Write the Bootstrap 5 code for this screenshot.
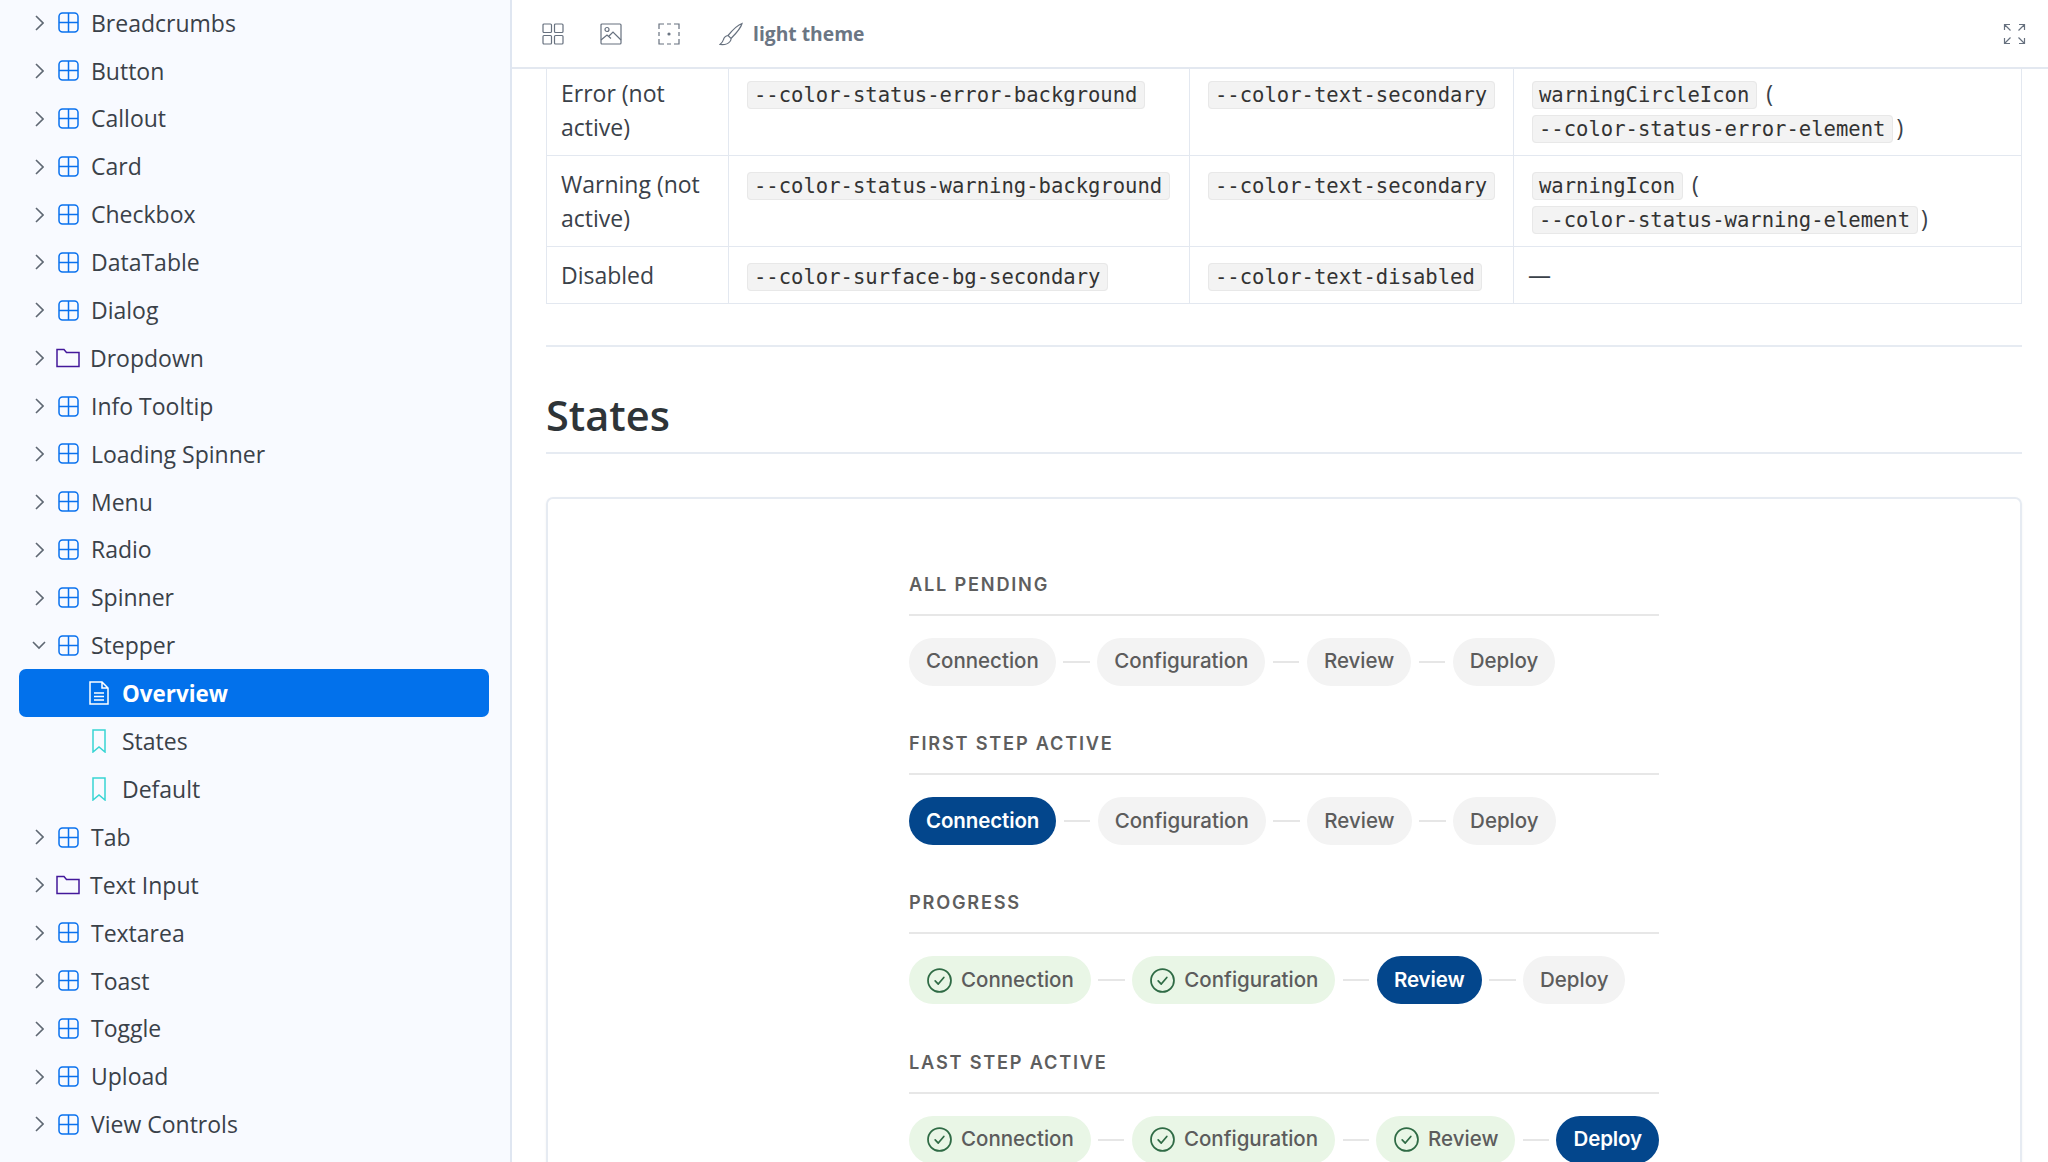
<!DOCTYPE html>
<html lang="en">

<head>
  <meta charset="UTF-8">
  <meta name="viewport" content="width=device-width, initial-scale=1.0">
  <title>Stepper - Overview</title>
  <link href="https://cdn.jsdelivr.net/npm/bootstrap@5.3.0/dist/css/bootstrap.min.css" rel="stylesheet">
  <style>
    html, body { height: 100%; overflow: hidden; }
    body { font-family: "Open Sans", "Noto Sans", sans-serif; color: #2e3438; background: #fff; }

    /* sidebar */
    .side-panel { width: 512px; flex: none; background: #f8faff; border-right: 2px solid #dfe6f1; overflow: hidden; }
    .tree-list { margin: -1px 0 0; padding: 0 21px 0 19px; }
    .tree-row { height: 47.9px; padding-left: 16px; font-size: 23px; color: #3a4149; }
    .tree-row.leaf { padding-left: 70px; }
    .tree-row.selected { background: #0271eb; color: #fff; font-weight: 700; font-size: 22.4px; border-radius: 7px; }
    .chev { width: 9px; height: 16px; flex: none; margin-right: 14px; fill: none; stroke: #5f6873; stroke-width: 1.6; }
    .chev.open { width: 14px; height: 9px; margin-left: -3px; margin-right: 12px; }
    .ic-comp { width: 21px; height: 21px; flex: none; margin-right: 12px; fill: none; stroke: #0971ee; stroke-width: 1.5; }
    .ic-folder { width: 24px; height: 20px; flex: none; margin: 0 10px 0 -2px; fill: none; stroke: #43189b; stroke-width: 1.5; }
    .ic-doc { width: 20px; height: 24px; flex: none; margin-right: 13px; fill: none; stroke: #fff; stroke-width: 1.5; }
    .ic-mark { width: 14px; height: 24px; flex: none; margin: 0 16px 0 3px; fill: none; stroke: #37d5d3; stroke-width: 1.5; }

    /* toolbar */
    .top-bar { height: 69px; flex: none; padding: 0 22px 0 30px; background: #fff; border-bottom: 2px solid #e3e8f0; position: relative; z-index: 1; }
    .tool-ic { width: 22px; height: 22px; fill: none; stroke: #67717f; stroke-width: 1.2; margin-right: 36px; }
    .tool-ic.brush { width: 25px; height: 24px; margin-right: 9px; margin-left: 3px; }
    .tool-ic.expand { margin-right: 0; width: 23px; }
    .theme-label { font-size: 19.3px; font-weight: 700; color: #6b7684; padding-top: 2px; }

    /* docs */
    .doc-body { padding: 0 26px 0 34px; overflow: hidden; min-height: 0; }
    .tokens { margin: -5px 0 0; table-layout: fixed; width: 1476px; font-size: 23px; line-height: 34px; --bs-border-color: #e3e8f0; color: #3a4149; }
    .tokens > tbody > tr > td { padding: 11px 14px; color: #3a4149; }
    .col-state { width: 182px; }
    .col-bg { width: 461px; }
    .col-text { width: 324px; }
    .tk { font-family: "DejaVu Sans Mono", "Liberation Mono", monospace; font-size: 20.55px; line-height: 1; color: #333; background: #f3f3f3; border: 1px solid #e8e8e8; border-radius: 4px; padding: 1px 6.5px; margin: 0 3.5px; white-space: nowrap; }
    .dash-cell { color: #666; }
    .rule-line { margin: 41px 0 0; border: 0; border-top: 2px solid #e6ebf2; opacity: 1; }
    .sec-title { font-size: 41.5px; font-weight: 600; color: #2e3438; line-height: 1.2; margin: 44px 0 0; padding-bottom: 11px; border-bottom: 2px solid #e6ebf2; }
    .demo-box { margin-top: 43px; height: 800px; padding-top: 73px; border: 2px solid #e6ebf2; border-radius: 7px; box-shadow: 0 1px 3px rgba(0,0,0,.05); }
    .demo-inner { width: 750px; margin: 0 auto; font-family: Inter, "Open Sans", sans-serif; }
    .demo-label { font-size: 18.2px; font-weight: 600; letter-spacing: 1.78px; line-height: 24px; color: #5e5e5e; padding-bottom: 18px; border-bottom: 2px solid #e7e7e7; margin: 0 0 22px; }
    .step-row { margin-bottom: 45.3px; }
    .step-pill { height: 48px; padding: 0 17px; font-size: 20.5px; font-weight: 500; color: #5c5c5c; background: #f3f3f3; }
    .step-pill.current { background: #03468c; color: #fff; font-weight: 600; letter-spacing: -.12px; }
    .step-pill.done { background: #e9f6e6; }
    .step-dash { width: 26.5px; height: 2px; margin: 0 7.5px; background: #e6e6e6; }
    .ic-check { width: 27px; height: 27px; margin-right: 8px; fill: none; stroke: #2f6b45; stroke-width: 1.3; stroke-linecap: round; stroke-linejoin: round; }
  </style>
</head>

<body>
  <svg class="d-none">
    <symbol id="comp" viewBox="0 0 21 21"><rect x="1" y="1" width="19" height="19" rx="3.5"/><path d="M10.5 1v19M1 10.5h19"/></symbol>
    <symbol id="folder" viewBox="0 0 24 20"><path d="M1 18.5V1.5h7l2.5 3h12.500v14z"/></symbol>
    <symbol id="mark" viewBox="0 0 14 24"><path d="M1 1h12v22l-6-5-6 5z"/></symbol>
    <symbol id="check" viewBox="0 0 20 20"><circle cx="10" cy="10" r="8.500"/><path d="M6.800 10.300l2.300 2.300 4.100-4.800"/></symbol>
  </svg>

  <div class="d-flex vh-100">
    <!-- Sidebar -->
    <nav class="side-panel">
      <ul class="tree-list list-unstyled" id="tree"></ul>
    </nav>

    <!-- Main -->
    <main class="flex-grow-1 d-flex flex-column overflow-hidden">
      <div class="top-bar d-flex align-items-center">
        <svg class="tool-ic" viewBox="0 0 22 22"><rect x="1" y="1" width="8.500" height="8.500" rx="1"/><rect x="12.500" y="1" width="8.500" height="8.500" rx="1"/><rect x="1" y="12.500" width="8.500" height="8.500" rx="1"/><rect x="12.500" y="12.500" width="8.500" height="8.500" rx="1"/></svg>
        <svg class="tool-ic" viewBox="0 0 22 22"><rect x="1" y="1" width="20" height="20" rx="1"/><circle cx="7" cy="6.500" r="2"/><path d="M1 17l6-5 4 3.500M9 13l4-4 8 8"/></svg>
        <svg class="tool-ic" viewBox="0 0 22 22"><path d="M1 6V1h5M9 1h4M16 1h5v5M21 9v4M21 16v5h-5M13 21H9M6 21H1v-5M1 13V9"/><circle cx="11" cy="11" r="1" fill="#67717f"/></svg>
        <svg class="tool-ic brush" viewBox="0 0 25 24"><path d="M23 1.500c-3 1-9 6-14 12l3 3c5-5 10-11 11-15zM9 13.500c-3 .5-4 2-4.500 4-.3 1.500-1.500 3-3.500 5 4 .5 8-.5 10-3 1-1.200 1.300-2 1-3.500"/></svg>
        <span class="theme-label">light theme</span>
        <svg class="tool-ic expand ms-auto" viewBox="0 0 23 22"><path d="M1.500 7V1.500H7M1.500 1.500l6 6M21.500 7V1.500H16M21.500 1.500l-6 6M1.500 15v5.500H7M1.500 20.500l6-6M21.500 15v5.500H16M21.500 20.500l-6-6"/></svg>
      </div>

      <div class="doc-body flex-grow-1">
        <table class="tokens table table-bordered">
          <colgroup><col class="col-state"><col class="col-bg"><col class="col-text"><col></colgroup>
          <tbody>
            <tr>
              <td>Error (not active)</td>
              <td><code class="tk">--color-status-error-background</code></td>
              <td><code class="tk">--color-text-secondary</code></td>
              <td><code class="tk">warningCircleIcon</code> ( <code class="tk">--color-status-error-element</code>)</td>
            </tr>
            <tr>
              <td>Warning (not active)</td>
              <td><code class="tk">--color-status-warning-background</code></td>
              <td><code class="tk">--color-text-secondary</code></td>
              <td><code class="tk">warningIcon</code> ( <code class="tk">--color-status-warning-element</code>)</td>
            </tr>
            <tr>
              <td>Disabled</td>
              <td><code class="tk">--color-surface-bg-secondary</code></td>
              <td><code class="tk">--color-text-disabled</code></td>
              <td class="dash-cell">—</td>
            </tr>
          </tbody>
        </table>

        <hr class="rule-line">
        <h2 class="sec-title">States</h2>

        <div class="demo-box">
          <div class="demo-inner" id="demos"></div>
        </div>
      </div>
    </main>
  </div>

  <script>
    // Sidebar tree
    const tree = [
      ["Breadcrumbs"], ["Button"], ["Callout"], ["Card"], ["Checkbox"], ["DataTable"], ["Dialog"],
      ["Dropdown", "folder"], ["Info Tooltip"], ["Loading Spinner"], ["Menu"], ["Radio"], ["Spinner"],
      ["Stepper", "comp", true],
      ["Overview", "doc"], ["States", "mark"], ["Default", "mark"],
      ["Tab"], ["Text Input", "folder"], ["Textarea"], ["Toast"], ["Toggle"], ["Upload"], ["View Controls"]
    ];

    document.getElementById("tree").innerHTML = tree.map(([name, kind = "comp", open]) => {
      if (kind === "doc") {
        return `<li class="tree-row leaf selected d-flex align-items-center">
          <svg class="ic-doc" viewBox="0 0 20 24"><path d="M1 1h12l6 6v16H1zM13 1v6h6M5 12h10M5 15.500h10M5 19h10"/></svg>${name}</li>`;
      }
      if (kind === "mark") {
        return `<li class="tree-row leaf d-flex align-items-center"><svg class="ic-mark"><use href="#mark"/></svg>${name}</li>`;
      }
      const chev = open
        ? '<svg class="chev open" viewBox="0 0 14 9"><path d="M1 1l6 6 6-6"/></svg>'
        : '<svg class="chev" viewBox="0 0 9 16"><path d="M1 1l7 7-7 7"/></svg>';
      const icon = kind === "folder"
        ? '<svg class="ic-folder"><use href="#folder"/></svg>'
        : '<svg class="ic-comp"><use href="#comp"/></svg>';
      return `<li class="tree-row d-flex align-items-center">${chev}${icon}${name}</li>`;
    }).join("");

    // Stepper demos: state per step is p(ending), a(ctive) or d(one)
    const steps = ["Connection", "Configuration", "Review", "Deploy"];
    const demos = [
      ["All pending", "pppp"],
      ["First step active", "appp"],
      ["Progress", "ddap"],
      ["Last step active", "ddda"]
    ];

    document.getElementById("demos").innerHTML = demos.map(([label, states]) => {
      const pills = steps.map((step, i) => {
        const cls = { p: "", a: "current", d: "done" }[states[i]];
        const check = states[i] === "d" ? '<svg class="ic-check"><use href="#check"/></svg>' : "";
        const dash = i < steps.length - 1 ? '<span class="step-dash"></span>' : "";
        return `<span class="step-pill ${cls} rounded-pill d-inline-flex align-items-center">${check}${step}</span>${dash}`;
      }).join("");
      return `<p class="demo-label text-uppercase">${label}</p><div class="step-row d-flex align-items-center">${pills}</div>`;
    }).join("");
  </script>

  <script src="https://cdn.jsdelivr.net/npm/bootstrap@5.3.0/dist/js/bootstrap.bundle.min.js"></script>
</body>

</html>
